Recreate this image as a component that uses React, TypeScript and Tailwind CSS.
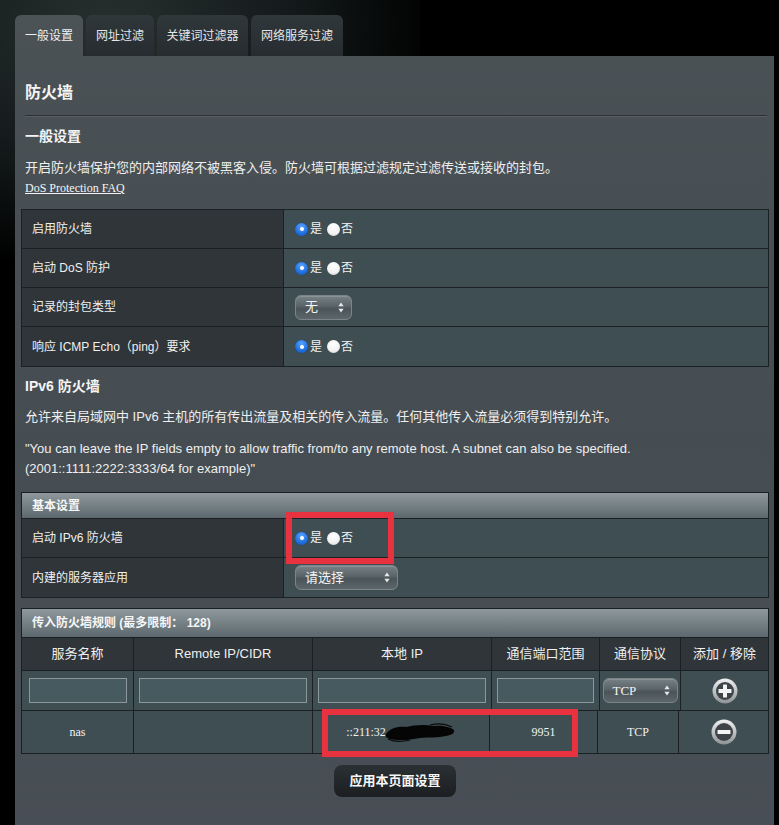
import React from "react";

const font = "font-['Liberation_Sans','Noto_Sans_CJK_SC',sans-serif]";

function Radio({ checked }: { checked: boolean }) {
  return checked ? (
    <span className="inline-flex h-[13px] w-[13px] items-center justify-center rounded-full bg-[radial-gradient(circle_at_50%_30%,#5aa4ff_0%,#1f6fe0_60%,#1655b8_100%)] shadow-[0_0_1px_#0b3a80]">
      <span className="h-[4px] w-[4px] rounded-full bg-white" />
    </span>
  ) : (
    <span className="inline-block h-[13px] w-[13px] rounded-full bg-[radial-gradient(circle_at_50%_30%,#ffffff_0%,#f2f2f2_60%,#cfcfcf_100%)]" />
  );
}

function YesNo() {
  return (
    <div className="flex items-center text-[12px] text-[#f2f2f2]">
      <Radio checked />
      <span className="ml-[2px]">是</span>
      <span className="ml-[5px] flex"><Radio checked={false} /></span>
      <span className="ml-[1px]">否</span>
    </div>
  );
}

function Arrows() {
  return (
    <svg width="6" height="11" viewBox="0 0 6 11" className="shrink-0">
      <path d="M3 0.5 L5.6 4.2 H0.4 Z" fill="#e8e8e8" />
      <path d="M3 10.5 L5.6 6.8 H0.4 Z" fill="#e8e8e8" />
    </svg>
  );
}

function Select({ label, w, serif }: { label: string; w: string; serif?: boolean }) {
  return (
    <div
      className={`flex h-[25px] items-center justify-between rounded-[6px] border border-[#7b8589] bg-[linear-gradient(180deg,#778185_0%,#5a6468_45%,#4b5559_55%,#5d676b_100%)] pl-[9px] pr-[7px] text-[13px] text-[#f4f4f4] shadow-[inset_0_1px_0_rgba(255,255,255,0.15)] ${w} ${serif ? "font-['Liberation_Serif',serif]" : ""}`}
    >
      <span>{label}</span>
      <Arrows />
    </div>
  );
}

function LabelRow({ label, children, last }: { label: string; children: React.ReactNode; last?: boolean }) {
  return (
    <div className={`grid h-[39px] grid-cols-[262px_1fr] ${last ? "" : "border-b border-[#1b2024]"}`}>
      <div className="flex items-center border-r border-[#1b2024] bg-[#2f3539] pl-[10px] text-[12px] text-[#f0f0f0]">
        {label}
      </div>
      <div className="flex items-center bg-[#3f4e53] pl-[11px]">{children}</div>
    </div>
  );
}

function HeaderBar({ children, h }: { children: React.ReactNode; h: string }) {
  return (
    <div className={`flex items-center border-b border-[#1b2024] bg-[linear-gradient(180deg,#8e989d_0%,#737e83_55%,#5d686e_100%)] pl-[10px] text-[12px] font-bold text-[#f6f6f6] ${h}`}>
      {children}
    </div>
  );
}

function CircleBtn({ plus }: { plus: boolean }) {
  return (
    <svg width="26" height="26" viewBox="0 0 26 26">
      <defs>
        <linearGradient id={plus ? "gp" : "gm"} x1="0" y1="0" x2="0" y2="1">
          <stop offset="0" stopColor="#f2f2f2" />
          <stop offset="0.5" stopColor="#bfc3c5" />
          <stop offset="1" stopColor="#8d9295" />
        </linearGradient>
      </defs>
      <circle cx="13" cy="13" r="12.5" fill={`url(#${plus ? "gp" : "gm"})`} />
      <circle cx="13" cy="13" r="9" fill="#3d4346" />
      <rect x="6.5" y="11" width="13" height="4" rx="0.5" fill="#f4f4f4" />
      {plus && <rect x="11" y="6.5" width="4" height="13" rx="0.5" fill="#f4f4f4" />}
    </svg>
  );
}

const cols = "grid-cols-[112px_179px_179px_108px_81px_1fr]";
const cellB = "border-r border-[#1b2024]";

function Input({ w }: { w: string }) {
  return <div className={`h-[25px] border border-[#8b979b] bg-[#465a5f] ${w}`} />;
}

export default function App() {
  return (
    <div className={`relative h-[825px] w-[779px] overflow-hidden bg-black ${font}`}>
      <div className="absolute left-0 top-0 h-[260px] w-[420px] bg-[radial-gradient(ellipse_at_25%_10%,#27302f_0%,#151b1c_40%,rgba(0,0,0,0)_75%)]" />
      <div className="relative flex gap-[3px] pl-[15px] pt-[15px]">
        <div className="flex h-[41px] w-[68px] items-center justify-center rounded-t-[6px] bg-[linear-gradient(180deg,#4c5357,#4a5155)] text-[12px] text-[#f0f0f0]">
          一般设置
        </div>
        <div className="flex h-[41px] w-[68px] items-center justify-center rounded-t-[6px] bg-[linear-gradient(180deg,#30373b,#262c30)] text-[12px] text-[#e6e6e6]">
          网址过滤
        </div>
        <div className="flex h-[41px] w-[91px] items-center justify-center rounded-t-[6px] bg-[linear-gradient(180deg,#30373b,#262c30)] text-[12px] text-[#e6e6e6]">
          关键词过滤器
        </div>
        <div className="flex h-[41px] w-[92px] items-center justify-center rounded-t-[6px] bg-[linear-gradient(180deg,#30373b,#262c30)] text-[12px] text-[#e6e6e6]">
          网络服务过滤
        </div>
      </div>

      <div className="relative ml-[15px] h-[769px] w-[759px] bg-[linear-gradient(180deg,#4a5155_0%,#464d52_50%,#484e55_100%)] pl-[6px] pr-[5px]">
        <div className="pl-[4px] pt-[27px] text-[16px] font-bold leading-[20px] text-[#f4f4f4]">防火墙</div>
        <div className="ml-[4px] mr-[2px] mt-[12px] h-[1px] bg-[#2a3034] shadow-[0_1px_0_#586065]" />
        <div className="pl-[4px] pt-[11px] text-[14px] font-bold leading-[18px] text-[#f4f4f4]">一般设置</div>
        <div className="pl-[4px] pt-[14px] text-[13px] leading-[18px] text-[#efefef]">
          开启防火墙保护您的内部网络不被黑客入侵。防火墙可根据过滤规定过滤传送或接收的封包。
        </div>
        <div className="pl-[4px] pt-[3px] font-['Liberation_Serif',serif] text-[12px] leading-[16px] text-[#f4f4f4] underline">
          DoS Protection FAQ
        </div>

        <div className="mt-[13px] border border-[#1b2024]">
          <LabelRow label="启用防火墙"><YesNo /></LabelRow>
          <LabelRow label="启动 DoS 防护"><YesNo /></LabelRow>
          <LabelRow label="记录的封包类型"><Select label="无" w="w-[57px]" /></LabelRow>
          <LabelRow label="响应 ICMP Echo（ping）要求" last><YesNo /></LabelRow>
        </div>

        <div className="pl-[4px] pt-[10px] text-[14px] font-bold leading-[18px] text-[#f4f4f4]">IPv6 防火墙</div>
        <div className="pl-[4px] pt-[13px] text-[13px] leading-[18px] text-[#efefef]">
          允许来自局域网中 IPv6 主机的所有传出流量及相关的传入流量。任何其他传入流量必须得到特别允许。
        </div>
        <div className="pl-[4px] pt-[13px] text-[13px] leading-[20px] text-[#efefef]">
          "You can leave the IP fields empty to allow traffic from/to any remote host. A subnet can also be specified.
          <br />
          (2001::1111:2222:3333/64 for example)"
        </div>

        <div className="mt-[13px] border border-[#1b2024]">
          <HeaderBar h="h-[26px]">基本设置</HeaderBar>
          <LabelRow label="启动 IPv6 防火墙"><YesNo /></LabelRow>
          <LabelRow label="内建的服务器应用" last><Select label="请选择" w="w-[103px]" /></LabelRow>
        </div>

        <div className="mt-[10px] border border-[#1b2024]">
          <HeaderBar h="h-[29px]">传入防火墙规则 (最多限制： 128)</HeaderBar>
          <div className={`grid h-[33px] ${cols} border-b border-[#1b2024] bg-[#2f3539] text-[13px] text-[#f0f0f0]`}>
            <div className={`flex items-center justify-center ${cellB}`}>服务名称</div>
            <div className={`flex items-center justify-center ${cellB}`}>Remote IP/CIDR</div>
            <div className={`flex items-center justify-center ${cellB}`}>本地 IP</div>
            <div className={`flex items-center justify-center ${cellB}`}>通信端口范围</div>
            <div className={`flex items-center justify-center ${cellB}`}>通信协议</div>
            <div className="flex items-center justify-center">添加 / 移除</div>
          </div>
          <div className={`grid h-[40px] ${cols} border-b border-[#1b2024] bg-[#3f4e53]`}>
            <div className={`flex items-center justify-center ${cellB}`}><Input w="w-[98px]" /></div>
            <div className={`flex items-center justify-center ${cellB}`}><Input w="w-[168px]" /></div>
            <div className={`flex items-center justify-center ${cellB}`}><Input w="w-[168px]" /></div>
            <div className={`flex items-center justify-center ${cellB}`}><Input w="w-[97px]" /></div>
            <div className={`flex items-center justify-center ${cellB}`}><Select label="TCP" w="w-[75px]" serif /></div>
            <div className="flex items-center justify-center"><CircleBtn plus /></div>
          </div>
          <div className={`grid h-[42px] grid-cols-[112px_179px_177px_108px_81px_1fr] bg-[#3f4e53] font-['Liberation_Serif',serif] text-[12px] text-[#f2f2f2]`}>
            <div className={`flex items-center justify-center ${cellB}`}>nas</div>
            <div className={`flex items-center justify-center ${cellB}`}></div>
            <div className={`flex items-center justify-center ${cellB}`}>
              <span>::211:32</span>
              <svg width="72" height="24" viewBox="0 0 72 24" className="-ml-[2px]">
                <path
                  d="M2 14 C6 8 14 6 22 7 C30 5 40 4 50 6 C58 5 66 7 70 10 C71 13 68 15 62 16 C54 18 44 17 36 18 C26 20 14 21 6 19 C2 18 1 16 2 14 Z"
                  fill="#050505"
                />
                <path d="M4 19 C10 22 18 22 26 20" stroke="#0a0a0a" strokeWidth="1.2" fill="none" />
                <path d="M46 5 C54 3 62 4 68 7" stroke="#0a0a0a" strokeWidth="1.2" fill="none" />
              </svg>
            </div>
            <div className={`flex items-center justify-center ${cellB}`}>9951</div>
            <div className={`flex items-center justify-center ${cellB}`}>TCP</div>
            <div className="flex items-center justify-center"><CircleBtn plus={false} /></div>
          </div>
        </div>

        <div className="mt-[11px] flex justify-center">
          <div className="flex h-[32px] w-[122px] items-center justify-center rounded-[8px] bg-[linear-gradient(180deg,#2b3034_0%,#1b1f22_100%)] text-[13px] font-bold text-[#f6f6f6]">
            应用本页面设置
          </div>
        </div>
      </div>

      <div className="pointer-events-none absolute left-[286px] top-[512px] h-[52px] w-[108px] border-[6px] border-[#e8323f]" />
      <div className="pointer-events-none absolute left-[322px] top-[709px] h-[48px] w-[256px] border-[6px] border-[#e8323f]" />
    </div>
  );
}
